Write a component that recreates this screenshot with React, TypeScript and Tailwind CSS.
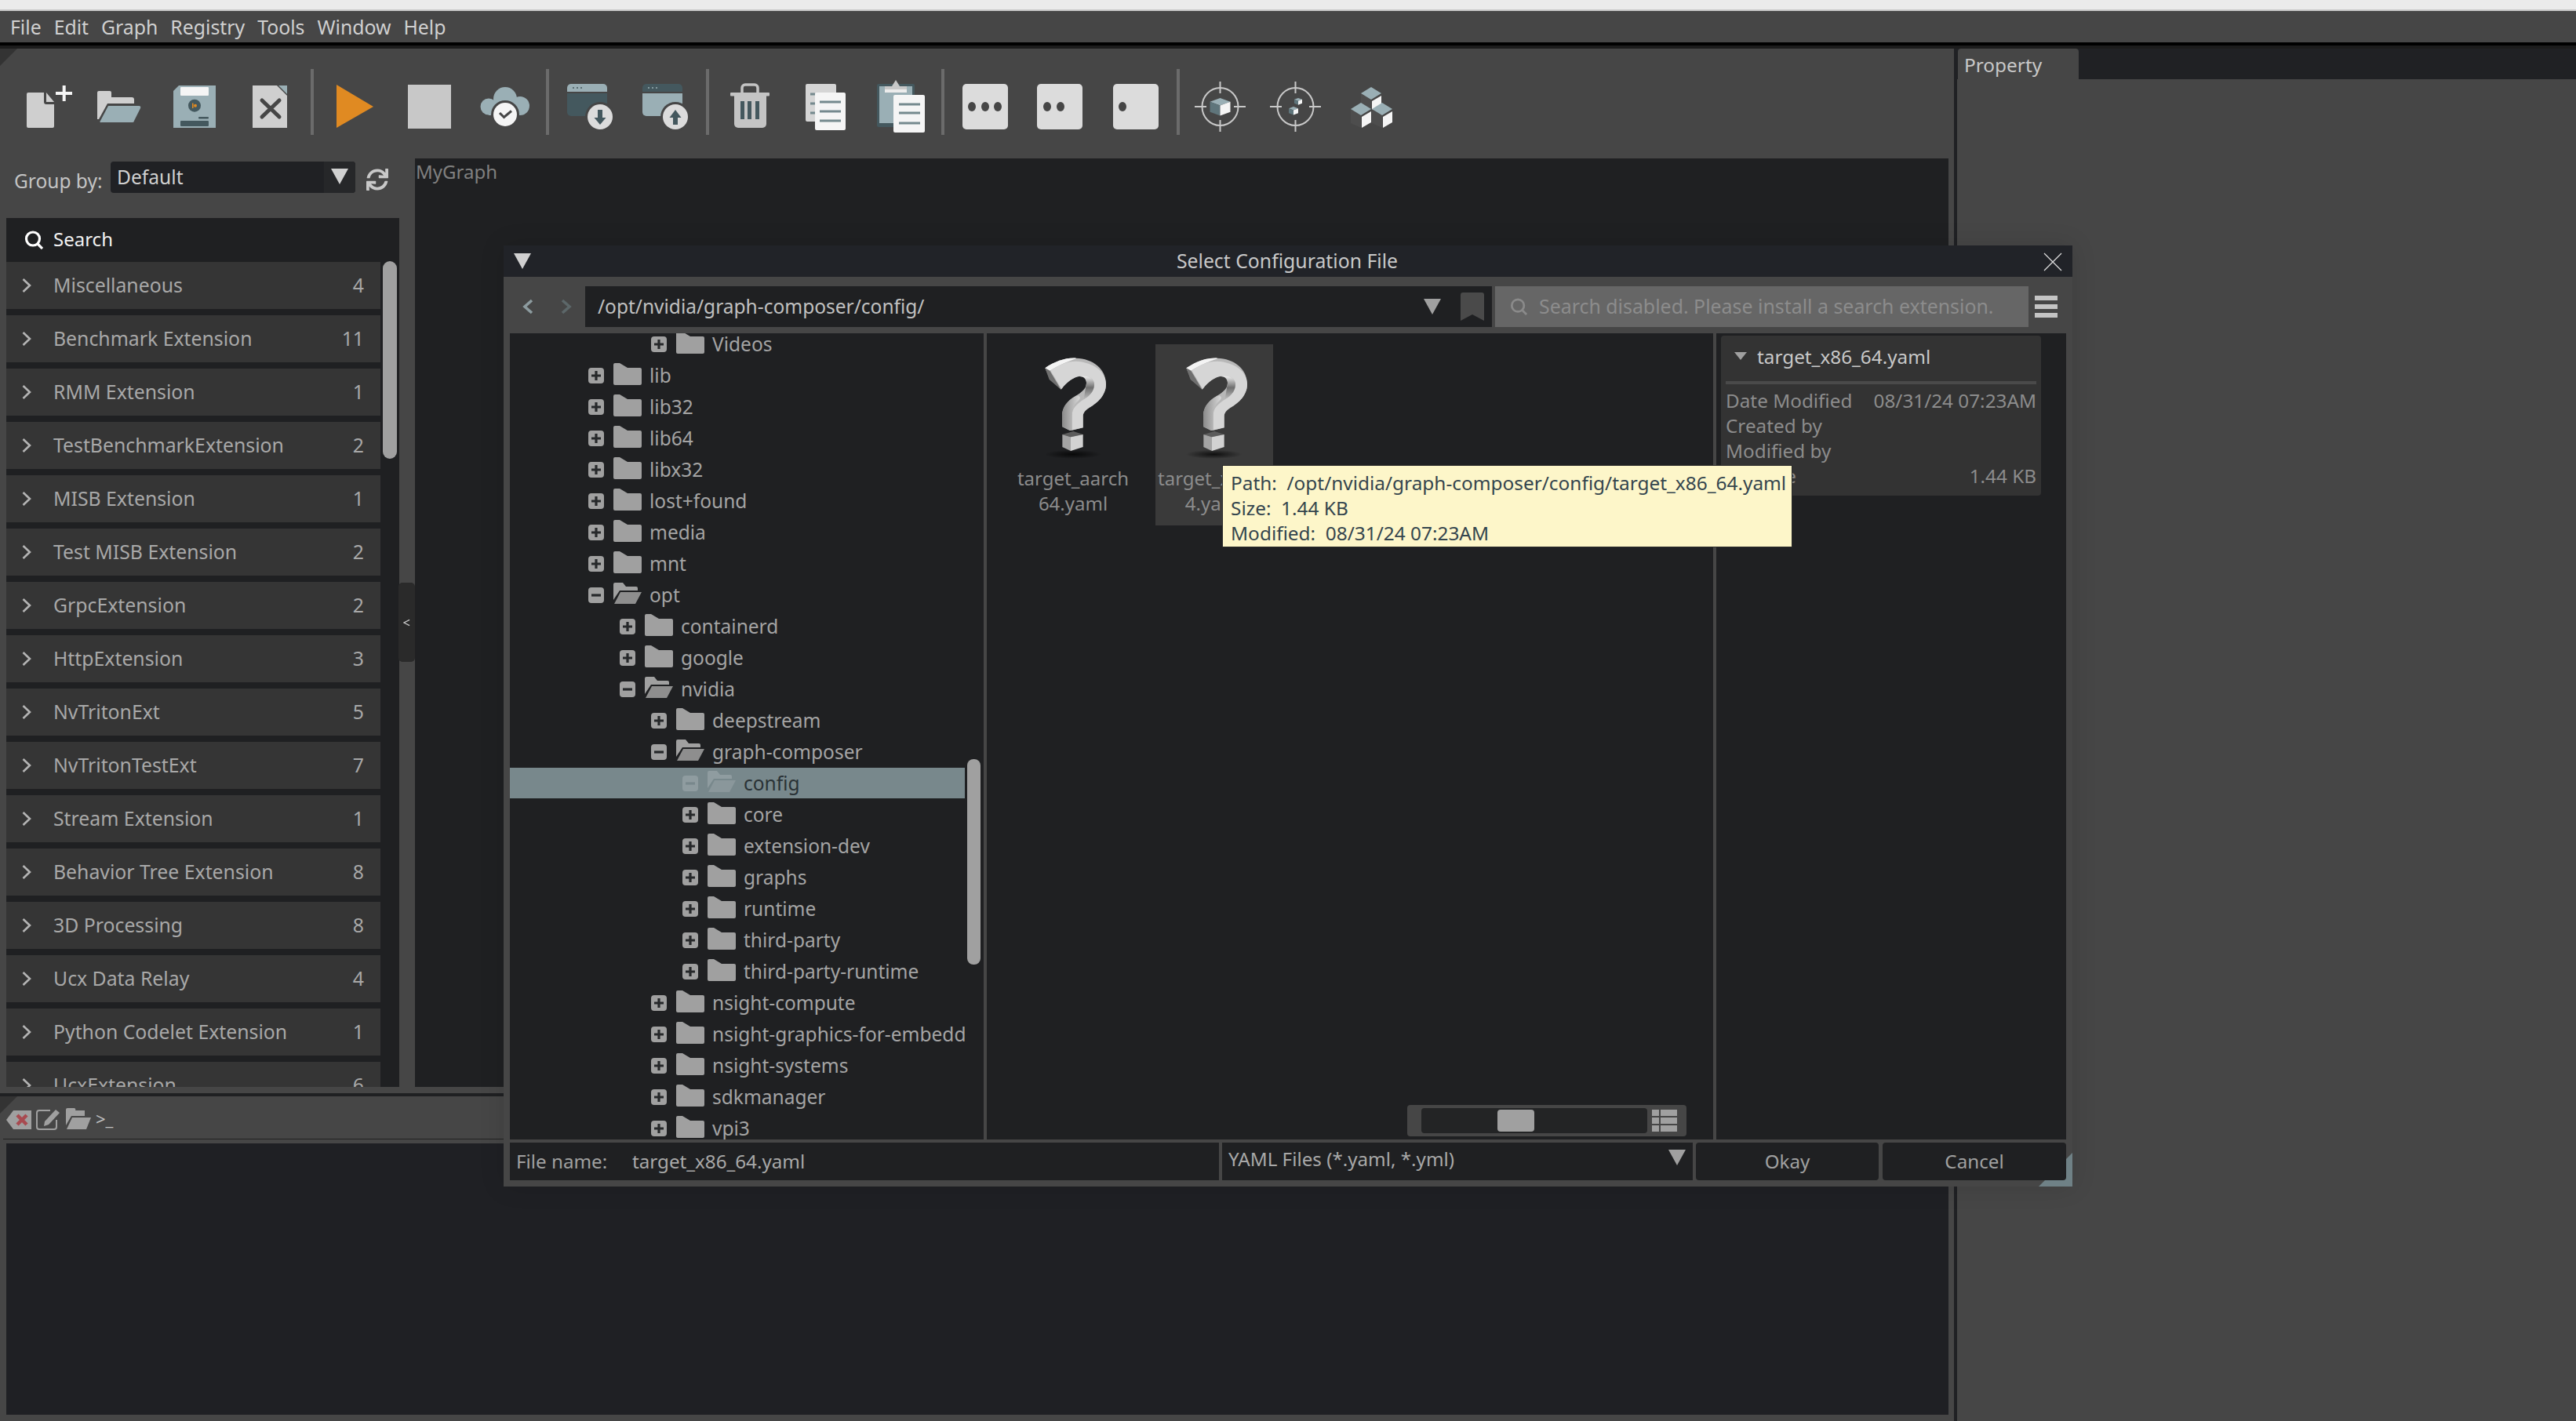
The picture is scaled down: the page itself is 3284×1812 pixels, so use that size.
import React from "react";
import { FaSync } from "react-icons/fa";

const teal = "#9aafb5";
const slate = "#44585e";

function Cell({ children }: { children?: React.ReactNode }) {
  return (
    <svg viewBox="0 0 96 84" className="w-[96px] h-[84px] shrink-0">
      {children}
    </svg>
  );
}
function Sep() {
  return <div className="w-[4px] h-[84px] mx-[4px] bg-[#6b6b6b] shrink-0" />;
}
function Dots({ xs, x0 }: { xs: number[]; x0: number }) {
  return (
    <Cell>
      <rect x={x0} y="19" width="58" height="58" rx="5" fill="#dcdcdc" />
      {xs.map((x) => (
        <ellipse key={x} cx={x} cy="48" rx="5" ry="6" fill="#464646" />
      ))}
    </Cell>
  );
}
function Cube({ cx, top, s }: { cx: number; top: number; s: number }) {
  const h = s * 0.37;
  const d = s;
  return (
    <g>
      <polygon points={`${cx - s},${top + h} ${cx},${top} ${cx + s},${top + h} ${cx},${top + 2 * h}`} fill={teal} />
      <polygon points={`${cx - s},${top + h} ${cx},${top + 2 * h} ${cx},${top + 2 * h + d} ${cx - s},${top + h + d}`} fill="#5f757b" />
      <polygon points={`${cx},${top + 2 * h} ${cx + s},${top + h} ${cx + s},${top + h + d} ${cx},${top + 2 * h + d}`} fill="#f5f5f5" />
    </g>
  );
}
function Target({ children }: { children?: React.ReactNode }) {
  return (
    <Cell>
      <ellipse cx="47.5" cy="48" rx="23" ry="24" fill="none" stroke="#c8c8c8" strokeWidth="2" />
      <path d="M47.5 16V31M47.5 65V80M15 48H30M65 48H80" stroke="#c8c8c8" strokeWidth="2" fill="none" />
      {children}
    </Cell>
  );
}
function NodeCube({ cx, top }: { cx: number; top: number }) {
  return (
    <g>
      <polygon points={`${cx - 13},${top + 8} ${cx},${top + 14} ${cx},${top + 32} ${cx - 13},${top + 26}`} fill="#4d4d4d" />
      <polygon points={`${cx},${top} ${cx + 13},${top + 8} ${cx},${top + 16} ${cx - 13},${top + 8}`} fill={teal} />
      <polygon points={`${cx + 1},${top + 18} ${cx + 13},${top + 11} ${cx + 13},${top + 25} ${cx + 1},${top + 32}`} fill="#f5f5f5" />
    </g>
  );
}

function Toolbar() {
  return (
    <div className="relative h-[140px] pt-[26px] pl-[8px] flex items-start">
      <svg viewBox="0 0 22 22" className="absolute left-0 top-0 w-[22px] h-[22px]">
        <polygon points="0,0 22,0 0,22" fill="#333333" />
      </svg>
      <Cell>
        <path d="M28 30H48V42a3 3 0 0 0 3 3H61V73a2 2 0 0 1-2 2H28a2 2 0 0 1-2-2V32a2 2 0 0 1 2-2z" fill="#cfcfcf" />
        <path d="M51 30L61 42H51z" fill="#cfcfcf" />
        <path d="M73.7 21V41M63 31H84" stroke="#f5f5f5" strokeWidth="4" fill="none" />
      </Cell>
      <Cell>
        <path d="M20 30a2 2 0 0 1 2-2H36a2 2 0 0 1 2 2V36H64a3 3 0 0 1 3 3V44H33L22 64H20z" fill="#cfcfcf" />
        <path d="M34 47H73a2 2 0 0 1 2 3L67 66a2 2 0 0 1-2 2H25a1 1 0 0 1-1-2z" fill={teal} />
      </Cell>
      <Cell>
        <path d="M28 21H75V75H21V28z" fill={teal} />
        <rect x="30" y="23" width="36" height="11" rx="1" fill="#f5f5f5" />
        <circle cx="48" cy="46.7" r="8" fill={slate} />
        <circle cx="49" cy="46.7" r="2" fill="#e08a22" />
        <rect x="45" y="43.5" width="1.5" height="6.5" fill="#e08a22" />
        <rect x="53" y="61" width="13" height="2.5" rx="1" fill={slate} />
        <rect x="30" y="66" width="36" height="7" rx="1" fill={slate} />
      </Cell>
      <Cell>
        <path d="M26 21H57L70 34V75H26z" fill="#cfcfcf" />
        <polygon points="59,21 70,21 70,32" fill={teal} />
        <path d="M38 40L60 61M60 40L38 61" stroke="#464646" strokeWidth="5" strokeLinecap="round" fill="none" />
      </Cell>
      <Sep />
      <Cell>
        <polygon points="25,20 72,48 25,75" fill="#e08a22" />
      </Cell>
      <Cell>
        <rect x="20" y="20" width="55" height="56" fill="#c8c8c8" />
      </Cell>
      <Cell>
        <circle cx="48" cy="38" r="15" fill={teal} />
        <circle cx="27" cy="48" r="10.5" fill={teal} />
        <circle cx="67" cy="47" r="12" fill={teal} />
        <rect x="27" y="42" width="40" height="17" fill={teal} />
        <circle cx="48" cy="58" r="18" fill="#464646" />
        <circle cx="48" cy="58" r="15" fill="#f5f5f5" />
        <path d="M41 56L46.5 61.5L56 53.5" stroke="#464646" strokeWidth="3" fill="none" />
      </Cell>
      <Sep />
      <Cell>
        <path d="M19 29V24a5 5 0 0 1 5-5H65a5 5 0 0 1 5 5V29z" fill={teal} />
        <path d="M19 31H70V55a5 5 0 0 1-5 5H24a5 5 0 0 1-5-5z" fill={slate} />
        <circle cx="27" cy="24" r="1" fill="#44585e" />
        <circle cx="32" cy="24" r="1" fill="#44585e" />
        <circle cx="37" cy="24" r="1" fill="#44585e" />
        <circle cx="61" cy="61" r="19" fill="#464646" />
        <circle cx="61" cy="61" r="16" fill="#dcdcdc" />
        <rect x="58" y="52" width="6" height="10" fill={slate} />
        <polygon points="53.5,62 68.5,62 61,71" fill={slate} />
      </Cell>
      <Cell>
        <path d="M19 29V24a5 5 0 0 1 5-5H65a5 5 0 0 1 5 5V29z" fill={slate} />
        <path d="M19 31H70V55a5 5 0 0 1-5 5H24a5 5 0 0 1-5-5z" fill={teal} />
        <circle cx="27" cy="24" r="1" fill={teal} />
        <circle cx="32" cy="24" r="1" fill={teal} />
        <circle cx="37" cy="24" r="1" fill={teal} />
        <circle cx="61" cy="61" r="19" fill="#464646" />
        <circle cx="61" cy="61" r="16" fill="#dcdcdc" />
        <rect x="58" y="61" width="6" height="10" fill={slate} />
        <polygon points="53.5,62 68.5,62 61,52" fill={slate} />
      </Cell>
      <Sep />
      <Cell>
        <path d="M38 30V24a4 4 0 0 1 4-4H54a4 4 0 0 1 4 4V30" stroke="#c4c4c4" strokeWidth="3.5" fill="none" />
        <rect x="23" y="30" width="50" height="4.5" rx="1" fill="#c4c4c4" />
        <path d="M28 34H69V70a5 5 0 0 1-5 5H33a5 5 0 0 1-5-5z" fill="#c4c4c4" />
        <rect x="36" y="41" width="5" height="23" fill={slate} />
        <rect x="45" y="41" width="5" height="23" fill={slate} />
        <rect x="55" y="41" width="5" height="23" fill={slate} />
      </Cell>
      <Cell>
        <rect x="23" y="19" width="39" height="48" rx="2" fill="#d5d5d5" />
        <path d="M29 32H35M29 44H35M29 56H35" stroke="#75898e" strokeWidth="3" fill="none" />
        <rect x="35" y="30" width="39" height="48" rx="2" fill="#f5f5f5" />
        <path d="M41 42H68M41 54H68M41 66H68" stroke="#75898e" strokeWidth="3" fill="none" />
      </Cell>
      <Cell>
        <rect x="18" y="19" width="48" height="55" rx="2" fill={slate} />
        <rect x="21" y="22" width="42" height="47" fill={teal} />
        <path d="M28 22H37L42 14L47 22H56V30H28z" fill="#c8c8c8" />
        <rect x="28" y="26" width="28" height="4" fill="#ececec" />
        <rect x="39" y="33" width="40" height="48" rx="2" fill="#f5f5f5" />
        <path d="M46 45H73M46 56H73M46 69H73" stroke="#75898e" strokeWidth="3" fill="none" />
      </Cell>
      <Sep />
      <Dots x0={19} xs={[31, 48, 64]} />
      <Dots x0={18} xs={[31, 48]} />
      <Dots x0={19} xs={[31]} />
      <Sep />
      <Target>
        <Cube cx={47.5} top={37} s={13} />
      </Target>
      <Target>
        <Cube cx={51} top={37} s={5} />
        <Cube cx={45} top={48} s={6} />
      </Target>
      <Cell>
        <NodeCube cx={48} top={23} />
        <NodeCube cx={35} top={43} />
        <NodeCube cx={62} top={43} />
      </Cell>
    </div>
  );
}

const groups: [string, number][] = [
  ["Miscellaneous", 4],
  ["Benchmark Extension", 11],
  ["RMM Extension", 1],
  ["TestBenchmarkExtension", 2],
  ["MISB Extension", 1],
  ["Test MISB Extension", 2],
  ["GrpcExtension", 2],
  ["HttpExtension", 3],
  ["NvTritonExt", 5],
  ["NvTritonTestExt", 7],
  ["Stream Extension", 1],
  ["Behavior Tree Extension", 8],
  ["3D Processing", 8],
  ["Ucx Data Relay", 4],
  ["Python Codelet Extension", 1],
  ["UcxExtension", 6],
];

function LeftPanel() {
  return (
    <div className="relative w-[529px] shrink-0 h-[1184px]">
      <div className="h-[76px] pl-[18px] flex items-start">
        <span className="mt-[11px] text-[24.5px] leading-[36px] text-[#c4c4c4] w-[123px]">Group by:</span>
        <div className="mt-[4px] w-[312px] h-[40px] rounded-[4px] bg-[#202124] flex">
          <span className="flex-1 pl-[8px] text-[24.6px] leading-[40px] text-[#d0d0d0]">Default</span>
          <div className="w-[40px] h-[40px] bg-[#262729] rounded-r-[4px] flex items-center justify-center">
            <svg viewBox="0 0 22 20" className="w-[22px] h-[20px] -mt-[2px]">
              <polygon points="0,0 22,0 11,20" fill="#d0d0d0" />
            </svg>
          </div>
        </div>
        <FaSync className="mt-[13px] ml-[14px] w-[28px] h-[28px] text-[#c8c8c8]" />
      </div>
      <div className="relative ml-[8px] w-[501px]">
        <div className="h-[56px] bg-[#1f2022] flex items-center pl-[23px]">
          <svg viewBox="0 0 24 24" className="w-[24px] h-[24px]">
            <circle cx="11" cy="10.5" r="8.5" fill="none" stroke="#ffffff" strokeWidth="3.2" />
            <path d="M17 17L23 23" stroke="#ffffff" strokeWidth="3.2" fill="none" />
          </svg>
          <span className="ml-[13px] -mt-[2px] text-[24px] text-[#f2f2f2]">Search</span>
        </div>
        <div className="h-[1052px] overflow-hidden bg-[#1f2022]">
          {groups.map(([n, c]) => (
            <div key={n} className="w-[477px] h-[60px] mb-[8px] bg-[#353535] flex items-center">
              <svg viewBox="0 0 12 18" className="ml-[20px] w-[12px] h-[18px] shrink-0">
                <path d="M1.5 1L10 9L1.5 17" fill="none" stroke="#b4b4b4" strokeWidth="2.6" />
              </svg>
              <span className="ml-[28px] flex-1 text-[24.8px] text-[#a8a8a8]">{n}</span>
              <span className="mr-[21px] text-[24.8px] text-[#a8a8a8]">{c}</span>
            </div>
          ))}
        </div>
        <div className="absolute left-[480px] top-[55px] w-[18px] h-[252px] rounded-[9px] bg-[#a0a0a0]" />
      </div>
      <div className="absolute left-[508px] top-[541px] w-[21px] h-[101px] rounded-[5px] bg-[#2a2a2a] flex items-center justify-center">
        <svg viewBox="0 0 10 10" className="w-[9px] h-[10px]">
          <path d="M9 1L1 5L9 9" fill="none" stroke="#c8c8c8" strokeWidth="1.4" />
        </svg>
      </div>
    </div>
  );
}

function LogBar() {
  return (
    <div className="relative h-[54px] flex items-center pl-[8px] pb-[1px]">
      <svg viewBox="0 0 22 22" className="absolute left-0 top-0 w-[22px] h-[22px]">
        <polygon points="0,0 22,0 0,22" fill="#333333" />
      </svg>
      <svg viewBox="0 0 32 24" className="w-[32px] h-[24px] mt-[6px]">
        <path d="M9 0H32V24H9L0 12z" fill="#a0a0a0" />
        <path d="M14 6L26 18M26 6L14 18" stroke="#a84a50" strokeWidth="4.5" fill="none" />
      </svg>
      <svg viewBox="0 0 32 28" className="ml-[6px] w-[32px] h-[28px] mt-[5px]">
        <path d="M18 3H4a3 3 0 0 0-3 3V24a3 3 0 0 0 3 3H23a3 3 0 0 0 3-3V15" fill="none" stroke="#a0a0a0" strokeWidth="2" />
        <path d="M25 2L30 6L16 21L10 23L11 17z" fill="#a0a0a0" />
      </svg>
      <svg viewBox="0 0 32 28" className="ml-[6px] w-[32px] h-[28px] mt-[5px]">
        <path d="M0 2a2 2 0 0 1 2-2H10a2 2 0 0 1 2 3H24V10H7L0 22z" fill="#a0a0a0" />
        <path d="M8 12H32L26 27H1z" fill="#a0a0a0" />
      </svg>
      <span className="ml-[6px] mt-[3px] text-[22px] leading-[28px] text-[#c0c0c0]">&gt;_</span>
    </div>
  );
}

function PlusBox({ minus, dim }: { minus?: boolean; dim?: boolean }) {
  const fill = dim ? "#8f9ca0" : "#a0a0a0";
  const mark = dim ? "#78888c" : "#26282a";
  return (
    <svg viewBox="0 0 20 20" className="w-[20px] h-[20px] shrink-0 -mt-[1px]">
      <rect width="20" height="20" rx="4" fill={fill} />
      <path d={minus ? "M4 10H16" : "M4 10H16M10 4V16"} stroke={mark} strokeWidth="3.2" fill="none" />
    </svg>
  );
}
function Folder({ open, dim }: { open?: boolean; dim?: boolean }) {
  const c = dim ? "#8f9ca0" : "#a0a0a0";
  if (open) {
    return (
      <svg viewBox="0 0 36 28" className="w-[36px] h-[28px] shrink-0 ml-[12px] -mt-[4px]">
        <path d="M0 2a2 2 0 0 1 2-2H12L16 5H29a2 2 0 0 1 2 2V10H8L0 22z" fill={c} />
        <path d="M9 12H36L28 27H1z" fill={dim ? "#8a979b" : "#8e8e8e"} />
      </svg>
    );
  }
  return (
    <svg viewBox="0 0 36 28" className="w-[36px] h-[28px] shrink-0 ml-[12px] -mt-[5px]">
      <path d="M0 2a2 2 0 0 1 2-2H8L18 6H34a2 2 0 0 1 2 2V26a2 2 0 0 1-2 2H2a2 2 0 0 1-2-2z" fill={c} />
    </svg>
  );
}

type Row = { n: string; l: number; open?: boolean; sel?: boolean };
const tree: Row[] = [
  { n: "Videos", l: 2 },
  { n: "lib", l: 0 },
  { n: "lib32", l: 0 },
  { n: "lib64", l: 0 },
  { n: "libx32", l: 0 },
  { n: "lost+found", l: 0 },
  { n: "media", l: 0 },
  { n: "mnt", l: 0 },
  { n: "opt", l: 0, open: true },
  { n: "containerd", l: 1 },
  { n: "google", l: 1 },
  { n: "nvidia", l: 1, open: true },
  { n: "deepstream", l: 2 },
  { n: "graph-composer", l: 2, open: true },
  { n: "config", l: 3, open: true, sel: true },
  { n: "core", l: 3 },
  { n: "extension-dev", l: 3 },
  { n: "graphs", l: 3 },
  { n: "runtime", l: 3 },
  { n: "third-party", l: 3 },
  { n: "third-party-runtime", l: 3 },
  { n: "nsight-compute", l: 2 },
  { n: "nsight-graphics-for-embedded", l: 2 },
  { n: "nsight-systems", l: 2 },
  { n: "sdkmanager", l: 2 },
  { n: "vpi3", l: 2 },
];
const indent: Record<number, string> = { 0: "pl-[100px]", 1: "pl-[140px]", 2: "pl-[180px]", 3: "pl-[220px]" };

function QuestionIcon() {
  return (
    <svg viewBox="99 57 450 450" className="w-[150px] h-[150px] block">
      <defs>
        <linearGradient id="qside" x1="0" y1="0" x2="1" y2="0">
          <stop offset="0" stopColor="#8a8a8a" />
          <stop offset="1" stopColor="#d8d8d8" />
        </linearGradient>
        <linearGradient id="qinner" x1="0" y1="0" x2="0" y2="1">
          <stop offset="0" stopColor="#f0f0f0" />
          <stop offset="0.5" stopColor="#6e6e6e" />
          <stop offset="1" stopColor="#bdbdbd" />
        </linearGradient>
        <radialGradient id="qshadow">
          <stop offset="0" stopColor="#000000" stopOpacity="0.75" />
          <stop offset="1" stopColor="#000000" stopOpacity="0" />
        </radialGradient>
      </defs>
      <ellipse cx="323" cy="478" rx="108" ry="17" fill="url(#qshadow)" />
      <path d="M217 148C255 122 295 108 335 110C400 112 450 150 450 210C450 250 420 280 385 300C370 310 362 320 362 332V376L312 387L282 372V330C282 300 300 275 330 257C360 240 375 225 375 205C375 190 365 180 350 180C330 180 300 200 278 230L235 190z" fill="#b8b8b8" />
      <path d="M217 148C255 122 295 108 335 110C345 112 300 118 235 158z" fill="#f4f4f4" />
      <path d="M217 148L235 158L278 230L233 192z" fill="#6f6f6f" />
      <path d="M238 158C270 135 300 122 335 122C400 125 450 160 450 210C450 250 420 280 385 300C370 310 362 320 362 332V376L320 386V330C320 300 340 285 365 268C395 250 405 230 405 210C405 190 385 178 360 178C335 178 305 195 280 228z" fill="#d6d6d6" />
      <path d="M360 178C385 178 405 190 405 210C405 230 395 250 365 268L375 205C375 190 365 180 350 180z" fill="url(#qinner)" />
      <path d="M282 330C282 300 300 275 330 257C345 248 358 260 345 272C330 285 320 300 320 330V386L312 387L282 372z" fill="url(#qside)" />
      <polygon points="283,402 325,390 362,402 315,412" fill="#5c5c5c" />
      <polygon points="283,402 315,412 315,465 283,450" fill="#a4a4a4" />
      <polygon points="315,412 362,402 362,450 315,465" fill="#d2d2d2" />
    </svg>
  );
}

function FileItem({ a, b, sel }: { a: string; b: string; sel?: boolean }) {
  return (
    <div className={sel ? "w-[150px] h-[231px] bg-[#3a3a3a]" : "w-[150px] h-[231px]"}>
      <QuestionIcon />
      <div className="mt-[5px] text-center text-[24px] leading-[32px] text-[#8c8c8c]">
        <div>{a}</div>
        <div>{b}</div>
      </div>
    </div>
  );
}

function Dialog() {
  return (
    <div className="absolute left-[642px] top-[313px] w-[2000px] h-[1200px] flex flex-col bg-[#464646] shadow-[0_0_30px_rgba(0,0,0,0.12)]">
      <svg viewBox="0 0 43 43" className="absolute right-0 bottom-0 w-[43px] h-[43px]">
        <polygon points="0,43 43,0 43,43" fill="#6f8186" />
      </svg>
      <div className="relative h-[40px] bg-[#212328] flex items-center justify-center shrink-0">
        <svg viewBox="0 0 22 20" className="absolute left-[13px] top-[10px] w-[22px] h-[20px]">
          <polygon points="0,0 22,0 11,20" fill="#d0d0d0" />
        </svg>
        <span className="-ml-[2px] text-[24.8px] text-[#c8c8c8]">Select Configuration File</span>
        <svg viewBox="0 0 24 24" className="absolute right-[13px] top-[9px] w-[24px] h-[24px]">
          <path d="M1 1L23 23M23 1L1 23" stroke="#e0e0e0" strokeWidth="1.2" fill="none" />
        </svg>
      </div>
      <div className="mt-[12px] h-[52px] flex shrink-0">
        <div className="w-[104px] flex items-center pl-[24px] gap-[35px]">
          <svg viewBox="0 0 14 20" className="w-[14px] h-[20px]">
            <path d="M12 2L3 10L12 18" fill="none" stroke="#8c9b9f" strokeWidth="3.6" />
          </svg>
          <svg viewBox="0 0 14 20" className="w-[14px] h-[20px]">
            <path d="M2 2L11 10L2 18" fill="none" stroke="#5c6769" strokeWidth="3.6" />
          </svg>
        </div>
        <div className="w-[1156px] bg-[#1f2022] flex items-center pl-[16px] relative">
          <span className="text-[24.5px] text-[#c0c0c0]">/opt/nvidia/graph-composer/config/</span>
          <svg viewBox="0 0 22 20" className="absolute left-[1069px] top-[16px] w-[22px] h-[20px]">
            <polygon points="0,0 22,0 11,20" fill="#a0a0a0" />
          </svg>
          <svg viewBox="0 0 30 36" className="absolute left-[1116px] top-[8px] w-[30px] h-[36px]">
            <path d="M3 0H27a3 3 0 0 1 3 3V36L15 28L0 36V3a3 3 0 0 1 3-3z" fill="#4a4a4a" />
          </svg>
        </div>
        <div className="ml-[4px] w-[680px] bg-[#666666] flex items-center pl-[19px]">
          <svg viewBox="0 0 24 24" className="w-[22px] h-[22px]">
            <circle cx="11" cy="10.5" r="8.5" fill="none" stroke="#8a8a8a" strokeWidth="3" />
            <path d="M17 17L23 23" stroke="#8a8a8a" strokeWidth="3" fill="none" />
          </svg>
          <span className="ml-[15px] text-[24.9px] text-[#8c8c8c]">Search disabled. Please install a search extension.</span>
        </div>
        <div className="ml-[8px] w-[29px] flex flex-col justify-center gap-[5px]">
          <div className="h-[6px] bg-[#c4c4c4]" />
          <div className="h-[6px] bg-[#c4c4c4]" />
          <div className="h-[6px] bg-[#c4c4c4]" />
        </div>
      </div>
      <div className="mt-[8px] ml-[8px] mr-[8px] h-[1028px] flex shrink-0">
        <div className="relative w-[604px] bg-[#1f2022] overflow-hidden">
          <div className="w-[580px] -mt-[6px]">
            {tree.map((r) => (
              <div
                key={r.n}
                className={`h-[40px] flex items-center whitespace-nowrap overflow-hidden ${indent[r.l]} ${r.sel ? "bg-[linear-gradient(#78888c,#78888c)] bg-no-repeat bg-[length:100%_39px]" : ""}`}
              >
                <PlusBox minus={r.open} dim={r.sel} />
                <Folder open={r.open} dim={r.sel} />
                <span className={`ml-[10px] text-[24.5px] ${r.sel ? "text-[#2a3236]" : "text-[#a4a4a4]"}`}>{r.n}</span>
              </div>
            ))}
          </div>
          <div className="absolute left-[583px] top-[543px] w-[17px] h-[262px] rounded-[8px] bg-[#a0a0a0]" />
        </div>
        <div className="w-[4px] bg-[#464646]" />
        <div className="w-[926px] bg-[#1f2022] flex flex-col">
          <div className="flex-1 pt-[14px] pl-[35px] flex gap-[30px]">
            <FileItem a="target_aarch" b="64.yaml" />
            <FileItem a="target_x86_6" b="4.yaml" sel />
          </div>
          <div className="self-end mr-[34px] mb-[4px] w-[356px] h-[40px] rounded-[4px] bg-[#464646] flex items-center pl-[18px]">
            <div className="relative w-[288px] h-[32px] rounded-[4px] bg-[#232425]">
              <div className="absolute left-[97px] top-[2px] w-[47px] h-[28px] rounded-[4px] bg-[#a0a0a0]" />
            </div>
            <svg viewBox="0 0 32 28" className="ml-[6px] w-[32px] h-[28px]">
              <path d="M0 0H9V8H0zM11 0H32V8H11zM0 10H9V18H0zM11 10H32V18H11zM0 20H9V28H0zM11 20H32V28H11z" fill="#a0a0a0" />
            </svg>
          </div>
        </div>
        <div className="w-[4px] bg-[#464646]" />
        <div className="w-[446px] bg-[#1f2022] pt-[3px] pl-[6px]">
          <div className="w-[408px] h-[204px] rounded-[4px] bg-[#333333] px-[6px]">
            <div className="h-[58px] flex items-center pl-[11px] pb-[4px]">
              <svg viewBox="0 0 16 10" className="w-[16px] h-[10px] -mt-[2px]">
                <polygon points="0,0 16,0 8,10" fill="#a0a0a0" />
              </svg>
              <span className="ml-[13px] text-[24.3px] text-[#c8c8c8]">target_x86_64.yaml</span>
            </div>
            <div className="h-[4px] bg-[#4a4a4a]" />
            <div className="mt-[5px] text-[24.3px] leading-[32px] text-[#8c8c8c]">
              <div className="flex justify-between"><span>Date Modified</span><span>08/31/24 07:23AM</span></div>
              <div>Created by</div>
              <div>Modified by</div>
              <div className="flex justify-between"><span>File Size</span><span>1.44 KB</span></div>
            </div>
          </div>
        </div>
      </div>
      <div className="relative mt-[4px] ml-[8px] h-[48px] flex text-[24.2px] shrink-0">
        <div className="w-[904px] bg-[#1f2022] flex items-center">
          <span className="ml-[8px] w-[148px] text-[#a0a0a0]">File name:</span>
          <span className="text-[#a8a8a8]">target_x86_64.yaml</span>
        </div>
        <div className="ml-[4px] w-[600px] bg-[#1f2022] flex pl-[8px] relative">
          <span className="text-[#a8a8a8] leading-[42px]">YAML Files (*.yaml, *.yml)</span>
          <svg viewBox="0 0 22 20" className="absolute left-[569px] top-[9px] w-[22px] h-[20px]">
            <polygon points="0,0 22,0 11,20" fill="#a0a0a0" />
          </svg>
        </div>
        <div className="ml-[4px] w-[233px] rounded-[4px] bg-[#1f2022] flex items-center justify-center text-[#a0a0a0]">Okay</div>
        <div className="ml-[5px] w-[234px] rounded-[4px] bg-[#1f2022] flex items-center justify-center text-[#a0a0a0]">Cancel</div>
      </div>
    </div>
  );
}

function Tooltip() {
  return (
    <div className="absolute left-[1558px] top-[593px] w-[727px] h-[105px] bg-[#fdf6c9] border border-[#2a2a2a] pl-[10px] pt-[6px] text-[24.4px] leading-[32px] text-[#34454e] whitespace-pre">
      <div>Path:  /opt/nvidia/graph-composer/config/target_x86_64.yaml</div>
      <div>Size:  1.44 KB</div>
      <div>Modified:  08/31/24 07:23AM</div>
    </div>
  );
}

export default function App() {
  return (
    <div className="relative w-[3284px] h-[1812px] overflow-hidden bg-[#464646] font-['Noto_Sans',sans-serif]">
      <div className="h-[14px] bg-[#ebebeb] border-b-2 border-[#c8c8c8]" />
      <div className="h-[40px] pl-[13px] pt-[2px] flex items-center gap-[16px] text-[24.8px] text-[#d0d0d0]">
        {["File", "Edit", "Graph", "Registry", "Tools", "Window", "Help"].map((m) => (
          <span key={m}>{m}</span>
        ))}
      </div>
      <div className="h-[4px] bg-black" />
      <div className="h-[4px] bg-[#1c1c1c]" />
      <div className="flex h-[1750px]">
        <div className="w-[2491px] shrink-0">
          <Toolbar />
          <div className="flex h-[1184px]">
            <LeftPanel />
            <div className="w-[1955px] h-[1184px] bg-[#1f2022] text-[24px] leading-[34px] text-[#808080] pl-[1px]">MyGraph</div>
          </div>
          <div className="mt-[8px] h-[4px] bg-[#1f2022] w-[2484px]" />
          <LogBar />
          <div className="ml-[4px] w-[2480px] h-[1px] bg-[#222222]" />
          <div className="mt-[5px] ml-[8px] w-[2476px] h-[346px] bg-[#1f2024]" />
        </div>
        <div className="w-[4px] bg-[#202124] shrink-0" />
        <div className="flex-1">
          <div className="h-[39px] bg-[#202124] flex">
            <div className="w-[154px] ml-[1px] rounded-t-[4px] bg-[#464646] pl-[8px] text-[24.4px] leading-[42px] text-[#c8c8c8]">Property</div>
          </div>
        </div>
      </div>
      <Dialog />
      <Tooltip />
    </div>
  );
}
